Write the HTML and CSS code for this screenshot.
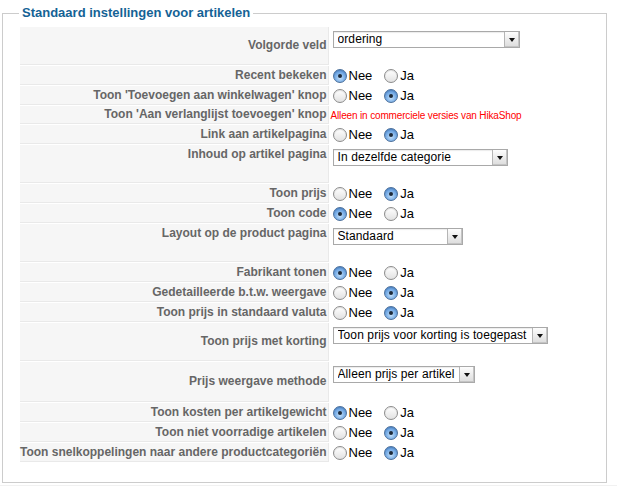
FILE: index.html
```html
<!DOCTYPE html>
<html lang="nl">
<head>
<meta charset="UTF-8" />
<title>Standaard instellingen voor artikelen</title>
<link rel="stylesheet" href="styles.css">
</head>
<body>
  <div class="page">
    <fieldset class="adminform">
      <legend>Standaard instellingen voor artikelen</legend>
      <table class="admintable">
        <tr class="tall">
          <td class="key">Volgorde veld</td>
          <td class="value top"><span class="dropdown w-ordering"><select><option>ordering</option></select></span></td>
        </tr>
        <tr>
          <td class="key">Recent bekeken</td>
          <td class="value"><div class="radios"><input type="radio" name="recent" checked><label>Nee</label><input type="radio" name="recent"><label>Ja</label></div></td>
        </tr>
        <tr>
          <td class="key">Toon 'Toevoegen aan winkelwagen' knop</td>
          <td class="value"><div class="radios"><input type="radio" name="cart"><label>Nee</label><input type="radio" name="cart" checked><label>Ja</label></div></td>
        </tr>
        <tr class="note-row">
          <td class="key">Toon 'Aan verlanglijst toevoegen' knop</td>
          <td class="value"><span class="note">Alleen in commerciele versies van HikaShop</span></td>
        </tr>
        <tr>
          <td class="key">Link aan artikelpagina</td>
          <td class="value"><div class="radios"><input type="radio" name="link"><label>Nee</label><input type="radio" name="link" checked><label>Ja</label></div></td>
        </tr>
        <tr class="tall">
          <td class="key top">Inhoud op artikel pagina</td>
          <td class="value top"><span class="dropdown w-content"><select><option>In dezelfde categorie</option></select></span></td>
        </tr>
        <tr>
          <td class="key">Toon prijs</td>
          <td class="value"><div class="radios"><input type="radio" name="price"><label>Nee</label><input type="radio" name="price" checked><label>Ja</label></div></td>
        </tr>
        <tr>
          <td class="key">Toon code</td>
          <td class="value"><div class="radios"><input type="radio" name="code" checked><label>Nee</label><input type="radio" name="code"><label>Ja</label></div></td>
        </tr>
        <tr class="tall">
          <td class="key top">Layout op de product pagina</td>
          <td class="value top"><span class="dropdown w-layout"><select><option>Standaard</option></select></span></td>
        </tr>
        <tr>
          <td class="key">Fabrikant tonen</td>
          <td class="value"><div class="radios"><input type="radio" name="brand" checked><label>Nee</label><input type="radio" name="brand"><label>Ja</label></div></td>
        </tr>
        <tr>
          <td class="key">Gedetailleerde b.t.w. weergave</td>
          <td class="value"><div class="radios"><input type="radio" name="vat"><label>Nee</label><input type="radio" name="vat" checked><label>Ja</label></div></td>
        </tr>
        <tr>
          <td class="key">Toon prijs in standaard valuta</td>
          <td class="value"><div class="radios"><input type="radio" name="currency"><label>Nee</label><input type="radio" name="currency" checked><label>Ja</label></div></td>
        </tr>
        <tr class="tall">
          <td class="key">Toon prijs met korting</td>
          <td class="value top"><span class="dropdown w-discount"><select><option>Toon prijs voor korting is toegepast</option></select></span></td>
        </tr>
        <tr class="tall taller">
          <td class="key">Prijs weergave methode</td>
          <td class="value top"><span class="dropdown w-method"><select><option>Alleen prijs per artikel</option></select></span></td>
        </tr>
        <tr>
          <td class="key">Toon kosten per artikelgewicht</td>
          <td class="value"><div class="radios"><input type="radio" name="weight" checked><label>Nee</label><input type="radio" name="weight"><label>Ja</label></div></td>
        </tr>
        <tr>
          <td class="key">Toon niet voorradige artikelen</td>
          <td class="value"><div class="radios"><input type="radio" name="stock"><label>Nee</label><input type="radio" name="stock" checked><label>Ja</label></div></td>
        </tr>
        <tr>
          <td class="key">Toon snelkoppelingen naar andere productcategoriën</td>
          <td class="value"><div class="radios"><input type="radio" name="shortcuts"><label>Nee</label><input type="radio" name="shortcuts" checked><label>Ja</label></div></td>
        </tr>
      </table>
    </fieldset>
  </div>
</body>
</html>
```

FILE: styles.css
```css
body {
  margin: 0;
  background: #f1f1f1;
  font-family: "Liberation Sans", Arial, sans-serif;
  font-size: 11px; color: #000;
}
.page {
  background: #fff;
  padding: 5px 0 2px;
}
fieldset.adminform {
  margin: 0 10px 0 2px;
  border: 1px solid #ccc;
  padding: 5px 16px 19px;
}
legend {
  color: #146295; font-size: 13px; font-weight: bold;
  line-height: 16px; padding: 0 3px;
}
table.admintable {
  border-collapse: separate; border-spacing: 1px;
}
table.admintable tr { height: 19px; }
table.admintable tr.tall { height: 38px; }
table.admintable tr.taller { height: 40px; }
table.admintable tr.note-row { height: 18px; }
td.key {
  background: #f6f6f6; color: #666;
  font-weight: bold; font-size: 12px; line-height: 15px;
  text-align: right; white-space: nowrap;
  padding: 0 1px 0 0;
  border-bottom: 1px solid #e9e9e9; border-right: 1px solid #e9e9e9;
  vertical-align: middle;
}
td.key.top { vertical-align: top; padding-top: 2px; }
td.value {
  padding: 0; vertical-align: middle;
  font-size: 13px; line-height: 16px;
}
td.value.top { vertical-align: top; }

/* radio groups */
.radios {
  display: flex; align-items: center;
  padding-top: 1px;
}
.radios input {
  appearance: none; -webkit-appearance: none;
  width: 14px; height: 14px; margin: 0 2px 0 3px;
  border-radius: 50%; border: 1px solid #8c8c8c;
  background: linear-gradient(#ffffff, #e2e2e2);
  box-shadow: inset 0 1px 1px rgba(0,0,0,0.12);
  position: relative;
}
.radios input:checked {
  border-color: #4a6f9b;
  background: radial-gradient(circle at 50% 65%, #c9e3fb 0, #7fb2e8 45%, #3f7fcf 100%);
}
.radios input:checked::after {
  content: ""; position: absolute;
  left: 4px; top: 4px; width: 4px; height: 4px;
  border-radius: 50%; background: #1d2a3a;
}
.radios label { margin-right: 9px; }

.note {
  color: #ff0000; font-size: 10px; letter-spacing: -0.15px;
  padding-left: 1px;
}

/* selects */
.dropdown {
  display: inline-block; position: relative;
  margin: 4px 0 0 3px; height: 17px;
}
.dropdown select {
  appearance: none; -webkit-appearance: none;
  width: 100%; height: 17px; margin: 0;
  border: 1px solid #a9a9a9; border-radius: 0;
  background: #fff; color: #000;
  font-family: "Liberation Sans", Arial, sans-serif;
  font-size: 12px; letter-spacing: 0.1px; line-height: 15px;
  padding: 0 16px 0 4px;
  box-shadow: inset 0 1px 1px rgba(0,0,0,0.08);
}
.dropdown::before {
  content: ""; position: absolute;
  right: 1px; top: 1px; bottom: 1px; width: 14px;
  border-left: 1px solid #b5b5b5;
  background: linear-gradient(#fdfdfd, #dcdcdc);
  box-shadow: inset -1px -1px 0 #c4c4c4;
  pointer-events: none;
}
.dropdown::after {
  content: ""; position: absolute;
  right: 5px; top: 7px;
  border-left: 3px solid transparent; border-right: 3px solid transparent;
  border-top: 4px solid #111;
  pointer-events: none;
}
.w-ordering { width: 187px; }
.w-content { width: 175px; }
.w-layout { width: 130px; }
.w-discount { width: 215px; }
.w-method { width: 142px; }
```
